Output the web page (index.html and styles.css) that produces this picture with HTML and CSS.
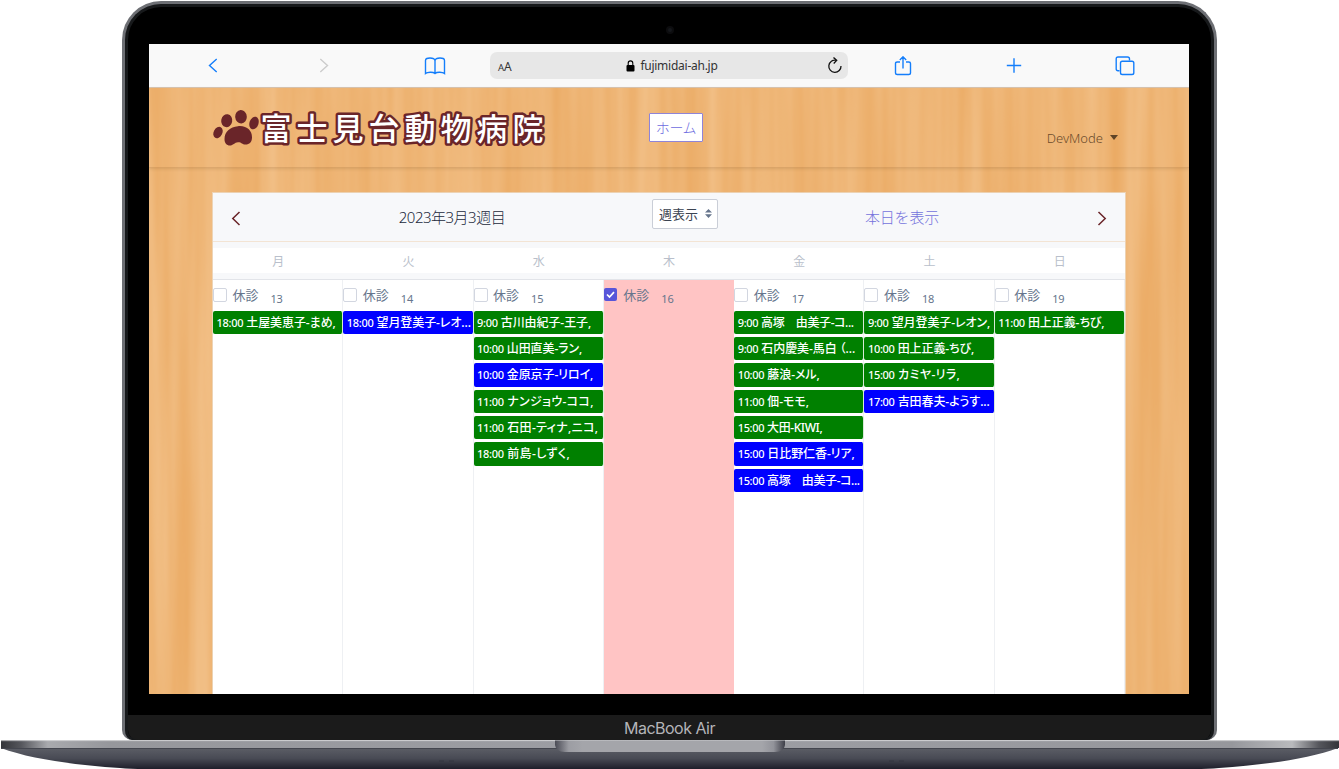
FILE: index.html
```html
<!DOCTYPE html>
<html lang="ja">
<head>
<meta charset="utf-8">
<title>富士見台動物病院</title>
<link rel="stylesheet" href="styles.css">
</head>
<body>
<div class="laptop">
  <div class="lid">
    <div class="bezel-top"><span class="camera"></span></div>
    <div class="screen">
      <div class="toolbar">
        <div class="tool"><svg width="10" height="16" viewBox="0 0 10 16"><path d="M8.7 1 1.500 7.500l7.200 6.500" class="line blue"/></svg></div>
        <div class="tool"><svg width="10" height="16" viewBox="0 0 10 16"><path d="M1.300 1 8.500 7.500l-7.200 6.500" class="line pale"/></svg></div>
        <div class="tool"><svg width="22" height="18" viewBox="0 0 22 18"><path d="M11 3.500C10.500 1.500 8.500 1 6 1 3.500 1 1.500 1.500 1.500 3.500v13C3.500 15 9 14.600 11 16.500 13 14.600 18.500 15 20.500 16.500v-13C20.500 1.500 18.500 1 16 1 13.500 1 11.500 1.500 11 3.500ZM11 3v13.500" class="line blue"/></svg></div>
        <div class="address">
          <span class="aa"><small>A</small>A</span>
          <span class="host"><svg width="9" height="12" viewBox="0 0 9 12"><rect x=".5" y="5" width="8" height="6.500" rx="1"/><path d="M2.200 5.500V3.200a2.300 2.300 0 0 1 4.600 0v2.300" fill="none" stroke="#000" stroke-width="1.100"/></svg>fujimidai-ah.jp</span>
          <svg width="16" height="18" viewBox="0 0 16 18"><path d="M9.200 3.300A6.100 6.100 0 1 0 14 9M6.500 .5 9.700 3.400 6.700 6.500" fill="none" stroke="#111" stroke-width="1.300"/></svg>
        </div>
        <div class="tool"><svg width="18" height="20" viewBox="0 0 18 20"><path d="M6 6H3.200Q1.500 6 1.500 7.500v9.500Q1.500 18.500 3.200 18.500h11.600q1.700 0 1.700-1.500V7.500q0-1.500-1.700-1.500h-2.800M9 12.500V1M5.800 3.900 9 .8l3.200 3.100" class="line blue"/></svg></div>
        <div class="tool"><svg width="16" height="16" viewBox="0 0 16 16"><path d="M8 .3v14.400M.8 7.500h14.400" class="line blue"/></svg></div>
        <div class="tool"><svg width="20" height="20" viewBox="0 0 20 20"><path d="M4.500 14.800H3Q1.200 14.800 1.200 13V3Q1.200 1 3 1h9.500q2 0 2 2v1.500" class="line blue"/><rect x="5.500" y="5.200" width="13.300" height="13.300" rx="1.800" class="line blue"/></svg></div>
      </div>
      <div class="site">
        <svg class="wood" width="1040" height="607" preserveAspectRatio="none">
          <filter id="grain" x="0" y="0" width="100%" height="100%" color-interpolation-filters="sRGB">
            <feTurbulence type="fractalNoise" baseFrequency="0.045 0.002" numOctaves="3" seed="12"/>
            <feColorMatrix values="0.04 0 0 0 0.914  0.12 0 0 0 0.650  0.20 0 0 0 0.360  0 0 0 0 1"/>
          </filter>
          <rect width="1040" height="607" filter="url(#grain)"/>
        </svg>
        <div class="page">
          <header class="nav">
            <div class="brand">
              <svg width="46" height="36" viewBox="0 0 46 36" fill="#6a2529"><ellipse cx="5" cy="22.500" rx="4.300" ry="6" transform="rotate(28 5 22.500)"/><ellipse cx="13.700" cy="10.700" rx="5.500" ry="6.500" transform="rotate(10 13.700 10.700)"/><ellipse cx="28" cy="6.800" rx="5.800" ry="6.700" transform="rotate(-4 28 6.800)"/><ellipse cx="41" cy="13" rx="4.500" ry="6.500" transform="rotate(18 41 13)"/><path d="M25 16.200c9-.8 14 4.500 14 11 0 5-2.500 7.300-6.500 7.300-3.500 0-4-2.500-7.500-2.300s-5 3.300-8 3.300c-3.500 0-5.500-2.500-5.500-6.500C11.500 21.500 17 17 25 16.200Z"/></svg>
              <svg class="logotype" width="300" height="56" viewBox="0 0 300 56"><text x="2.500" y="40">富士見台動物病院</text></svg>
            </div>
            <a class="home">ホーム</a>
            <div class="user">DevMode <i></i></div>
          </header>
          <main class="calendar">
            <div class="cal-head">
              <div class="c-arrow"><svg width="10" height="16" viewBox="0 0 10 16"><path d="M8.500 1 1.800 7.500l6.700 6.500" class="line wine"/></svg></div>
              <div class="c-title">2023年3月3週目</div>
              <div class="c-select"><span class="select">週表示<svg width="7" height="9" viewBox="0 0 7 9"><path d="M3.500 0 7 3.500H0ZM0 5.300h7L3.500 9Z" fill="#66758c"/></svg></span></div>
              <div class="c-today">本日を表示</div>
              <div class="c-arrow"><svg width="10" height="16" viewBox="0 0 10 16"><path d="M1.500 1 8.200 7.500l-6.700 6.500" class="line wine"/></svg></div>
            </div>
            <div class="week"><span>月</span><span>火</span><span>水</span><span>木</span><span>金</span><span>土</span><span>日</span></div>
            <div class="days">
              <section class="day"><div class="date"><b class="box"></b><label>休診</label><time>13</time></div>
                <p class="ev"><span>18:00</span> 土屋美恵子-まめ,</p></section>
              <section class="day"><div class="date"><b class="box"></b><label>休診</label><time>14</time></div>
                <p class="ev new"><span>18:00</span> 望月登美子-レオ...</p></section>
              <section class="day"><div class="date"><b class="box"></b><label>休診</label><time>15</time></div>
                <p class="ev"><span>9:00</span> 古川由紀子-王子,</p>
                <p class="ev"><span>10:00</span> 山田直美-ラン,</p>
                <p class="ev new"><span>10:00</span> 金原京子-リロイ,</p>
                <p class="ev kana"><span>11:00</span> ナンジョウ-ココ,</p>
                <p class="ev kana"><span>11:00</span> 石田-ティナ,ニコ,</p>
                <p class="ev kana"><span>18:00</span> 前島-しずく,</p></section>
              <section class="day closed"><div class="date"><b class="box on"><svg width="13" height="13" viewBox="0 0 13 13"><path d="m3 6.500 2.500 2.500L10 4.200" fill="none" stroke="#fff" stroke-width="1.700"/></svg></b><label>休診</label><time>16</time></div></section>
              <section class="day"><div class="date"><b class="box"></b><label>休診</label><time>17</time></div>
                <p class="ev tight"><span>9:00</span> 高塚　由美子-コ...</p>
                <p class="ev"><span>9:00</span> 石内慶美-馬白 （...</p>
                <p class="ev"><span>10:00</span> 藤浪-メル,</p>
                <p class="ev"><span>11:00</span> 佃-モモ,</p>
                <p class="ev tight"><span>15:00</span> 大田-KIWI,</p>
                <p class="ev new"><span>15:00</span> 日比野仁香-リア,</p>
                <p class="ev new tight"><span>15:00</span> 高塚　由美子-コ...</p></section>
              <section class="day"><div class="date"><b class="box"></b><label>休診</label><time>18</time></div>
                <p class="ev"><span>9:00</span> 望月登美子-レオン,</p>
                <p class="ev"><span>10:00</span> 田上正義-ちび,</p>
                <p class="ev kana"><span>15:00</span> カミヤ-リラ,</p>
                <p class="ev new"><span>17:00</span> 吉田春夫-ようす...</p></section>
              <section class="day"><div class="date"><b class="box"></b><label>休診</label><time>19</time></div>
                <p class="ev"><span>11:00</span> 田上正義-ちび,</p></section>
            </div>
          </main>
        </div>
      </div>
    </div>
    <div class="chin">MacBook Air</div>
  </div>
  <svg class="base" width="1339" height="29" viewBox="0 0 1339 29">
    <defs>
      <linearGradient id="deck"><stop offset="0" stop-color="#34353a"/><stop offset=".015" stop-color="#55565c"/><stop offset=".035" stop-color="#a9aaae"/><stop offset=".08" stop-color="#96979c"/><stop offset=".5" stop-color="#9d9ea4"/><stop offset=".92" stop-color="#96979c"/><stop offset=".965" stop-color="#b9babd"/><stop offset=".985" stop-color="#55565c"/><stop offset="1" stop-color="#34353a"/></linearGradient>
      <linearGradient id="under" x2="0" y2="1"><stop offset="0" stop-color="#5c5e66"/><stop offset=".5" stop-color="#484a54"/><stop offset="1" stop-color="#1e1e2a"/></linearGradient>
      <linearGradient id="notch"><stop offset="0" stop-color="#4a4b55"/><stop offset=".06" stop-color="#9c9da3"/><stop offset=".12" stop-color="#a4a5aa"/><stop offset=".9" stop-color="#a4a5aa"/><stop offset=".95" stop-color="#92939a"/><stop offset="1" stop-color="#3e3f49"/></linearGradient>
    </defs>
    <path d="M1 8C30 19 75 25 120 28Q130 29 145 29H1194Q1209 29 1219 28C1264 25 1309 19 1338 8Z" fill="url(#under)"/>
    <path d="M1 .5H1339V8H1Z" fill="url(#deck)"/>
    <path d="M1 .8H1339" stroke="#c6c7ca" stroke-width=".8" opacity=".6"/>
    <path d="M1 8.500H1338" stroke="#44464f" stroke-width="1"/>
    <path d="M555 .5H785V5Q784 12 775 12H565Q556 12 555 5Z" fill="url(#notch)"/>
    <path d="M439 21h5M449 21h5M889 21h5M899 21h5" stroke="#2b2c36" opacity=".5"/>
  </svg>
</div>
</body>
</html>
```
FILE: styles.css
```css
* { box-sizing: border-box; }
body {
  margin: 0;
  background: #fff;
  font-family: "Noto Sans", "Noto Sans CJK JP", sans-serif;
  overflow: hidden;
}
svg { display: block; flex: none; }
p { margin: 0; }
.line { fill: none; stroke-width: 1.4; }
.blue { stroke: #147efb; }
.pale { stroke: #ccc; }
.wine { stroke: #6a2529; stroke-width: 1.5; }

.laptop { width: 1339px; height: 769px; padding-top: 1px; }
.lid {
  width: 1095px;
  height: 739px;
  margin-left: 122px;
  padding: 0 4px;
  background: #000;
  border: 3px solid #6d6f74;
  border-bottom: 0;
  border-radius: 39px 39px 10px 10px;
  box-shadow: inset 0 0 0 3px #17191b;
  overflow: hidden;
}
.bezel-top { height: 40px; display: flex; justify-content: center; padding-top: 22px; }
.camera { width: 8px; height: 8px; border-radius: 50%; background: #15171b; border: 2px solid #0c0c0e; }
.screen { width: 1040px; height: 650px; margin-left: 20px; overflow: hidden; background: #fff; }

.toolbar {
  height: 43px;
  padding: 0 8.5px;
  display: flex;
  align-items: center;
  background: #f9f9f9;
}
.tool { flex: 1; display: flex; justify-content: center; }
.address {
  width: 358px;
  height: 27px;
  padding: 0 5px 0 8px;
  display: flex;
  align-items: center;
  justify-content: space-between;
  background: #e7e7e7;
  border-radius: 7px;
  color: #333;
}
.aa { font-size: 12px; width: 16px; white-space: nowrap; padding-top: 1px; }
.aa small { font-size: 9.5px; }
.host {
  display: flex;
  align-items: center;
  gap: 5px;
  padding-left: 3px;
  font-size: 12px;
  letter-spacing: -.25px;
}

.site { display: grid; height: 607px; background: #edb575; border-top: 1px solid #d9c6b2; }
.wood, .page { grid-area: 1 / 1; }
.page { position: relative; }
.nav {
  height: 80px;
  padding: 0 71px 0 64px;
  display: grid;
  grid-template-columns: 436px 54px 1fr;
  border-bottom: 1px solid rgba(120, 75, 30, .16);
  box-shadow: 0 1px 3px rgba(90, 50, 10, .16);
}
.brand { display: flex; align-items: flex-start; padding-top: 22px; }
.logotype { margin: -10px 0 0 -1px; }
.logotype text {
  font: 500 31px "Noto Sans CJK JP", sans-serif;
  letter-spacing: 5px;
  fill: #fff;
  stroke: #6a2529;
  stroke-width: 5px;
  stroke-linejoin: round;
  paint-order: stroke fill;
}
.home {
  height: 29px;
  margin-top: 25px;
  background: #fff;
  border: 1px solid #8f84d8;
  border-radius: 1px;
  color: #6d6be0;
  font: 300 14px/27px "Noto Sans CJK JP", sans-serif;
  letter-spacing: -.4px;
  text-align: center;
}
.user {
  display: flex;
  justify-content: flex-end;
  gap: 7px;
  padding-top: 40px;
  font-size: 13px;
  line-height: 20px;
  font-weight: 300;
  color: #6b4c2c;
}
.user i {
  margin-top: 7px;
  height: 0;
  border: 4.5px solid transparent;
  border-top: 5px solid #5f4427;
  border-bottom: 0;
}

.calendar {
  width: 912px;
  height: 520px;
  margin: 25px 0 0 64px;
  background: #f7f8fa;
  box-shadow: 0 0 0 1px rgba(235, 222, 205, .7);
}
.cal-head { display: flex; align-items: center; height: 49px; border-bottom: 1px solid #f3e4d4; }
.c-arrow { width: 46px; display: flex; justify-content: center; padding-top: 4px; }
.c-title, .c-today { font-size: 15px; line-height: 24px; text-align: center; font-weight: 300; }
.c-title { width: 386px; color: #22283a; letter-spacing: -.5px; }
.c-today { width: 354px; color: #7472dc; letter-spacing: -.2px; }
.c-select { width: 80px; display: flex; justify-content: center; padding-bottom: 7px; }
.select {
  width: 66px;
  height: 30px;
  padding: 0 5px 0 6px;
  display: flex;
  align-items: center;
  justify-content: space-between;
  background: #fff;
  border: 1px solid #caced7;
  border-radius: 2px;
  font-size: 13px;
  color: #3b4351;
}
.week {
  display: grid;
  grid-template-columns: repeat(7, 1fr);
  margin-top: 6px;
  height: 25px;
  background: #fff;
  font-size: 12px;
  line-height: 27px;
  text-align: center;
  color: #b9bfcb;
}
.days {
  display: grid;
  grid-template-columns: repeat(7, minmax(0, 1fr));
  margin-top: 6px;
  height: 440px;
  border-top: 1px solid #e2e4e9;
  background: #fff;
}
.day { border-right: 1px solid #eef0f3; }
.closed { background: #ffc4c4; border-right-color: #ffc4c4; }
.date { display: flex; height: 30.5px; color: #66758c; }
.box {
  width: 14px;
  height: 14px;
  margin-top: 8px;
  background: #fff;
  border: 1px solid #d2d6e0;
  border-radius: 2px;
}
.box.on { width: 13px; height: 13px; margin-right: 1px; background: #5755d9; border: 0; }
.date label { margin: 5px 0 0 5.5px; font-size: 13px; line-height: 20px; }
.date time { margin: 10px 0 0 12px; font-size: 11px; line-height: 18px; letter-spacing: -.2px; }
.ev {
  height: 23.4px;
  margin: 0 -1px 3px 0;
  padding-left: 3.5px;
  border-right: 1px solid #d7ead7;
  background: #008000;
  background-clip: padding-box;
  border-radius: 2px;
  color: #fff;
  font-size: 12px;
  font-weight: 500;
  line-height: 24.5px;
  letter-spacing: -.08px;
  font-feature-settings: "palt";
  white-space: nowrap;
  overflow: hidden;
}
.ev span { font-size: 11px; letter-spacing: -.3px; }
.ev.new { background-color: #00f; }
.ev.tight { letter-spacing: -.4px; }
.ev.kana { letter-spacing: .35px; }
.ev.kana span, .ev.tight span { letter-spacing: -.3px; }

.chin {
  height: 25px;
  margin: 21px -1px 0;
  background: #1b1b1b;
  border-radius: 0 0 10px 10px;
  color: #b4b4b8;
  font: 16px/27px Inter, "Liberation Sans", sans-serif;
  letter-spacing: -.5px;
  text-align: center;
}
```
